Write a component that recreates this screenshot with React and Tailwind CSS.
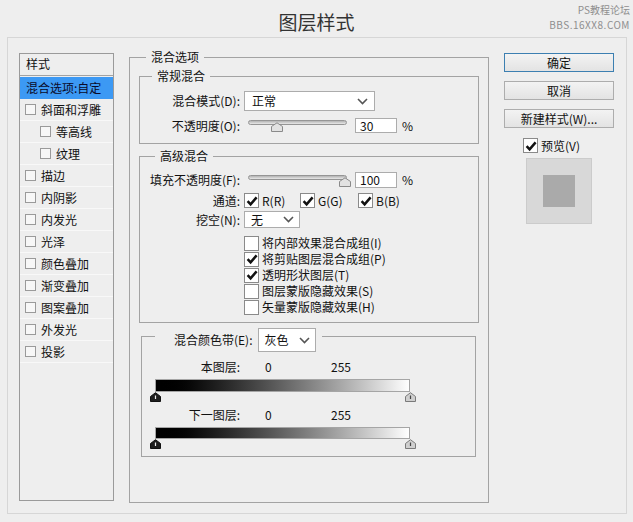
import React from "react";

const Check = () => (
  <svg width="12" height="12" viewBox="0 0 12 12">
    <path d="M1.6 6.2 L4.6 9.4 L10.6 2.4" fill="none" stroke="#111" strokeWidth="2.5" />
  </svg>
);

function Box({ checked }) {
  return (
    <div className="flex items-center justify-center w-[15px] h-[15px] bg-white border border-[#8a8a8a]">
      {checked ? <Check /> : null}
    </div>
  );
}

function SmallBox() {
  return <div className="w-[11px] h-[11px] border border-[#9a9a9a] bg-[#f7f7f7]" />;
}

const Chevron = () => (
  <svg width="11" height="7" viewBox="0 0 11 7">
    <path d="M1 1 L5.5 5.5 L10 1" fill="none" stroke="#555" strokeWidth="1.6" />
  </svg>
);

function Slider({ pos }) {
  return (
    <div className="relative w-[99px] h-[15px]">
      <div className="absolute left-0 right-0 top-[2px] h-[5px] rounded-full border border-[#959595] bg-gradient-to-b from-[#b3b3b3] to-[#e8e8e8]" />
      <svg className="absolute top-[4px]" style={{ left: pos - 6 }} width="12" height="10" viewBox="0 0 12 10">
        <path d="M0.5 9.5 V4.5 L6 0.8 L11.5 4.5 V9.5 Z" fill="#e2e2e2" stroke="#8a8a8a" />
      </svg>
    </div>
  );
}

function Thumb({ dark }) {
  return (
    <svg width="11" height="10" viewBox="0 0 11 10">
      <path
        d="M0.5 9.5 V4.5 L5.5 0.7 L10.5 4.5 V9.5 Z"
        fill={dark ? "#1e1e1e" : "#cfcfcf"}
        stroke={dark ? "#111" : "#7a7a7a"}
      />
      <path d="M5.5 3.5 V7" stroke={dark ? "#eee" : "#444"} strokeWidth="1.2" />
    </svg>
  );
}

function Button({ children, primary }) {
  return (
    <div
      className={
        primary
          ? "flex items-center justify-center w-[110px] h-[19px] border border-[#3c7fb1] bg-gradient-to-b from-[#f3f3f3] to-[#e3e3e3] text-[12px] leading-[16px]"
          : "flex items-center justify-center w-[110px] h-[19px] border border-[#adadad] bg-gradient-to-b from-[#f3f3f3] to-[#e3e3e3] text-[12px] leading-[16px]"
      }
    >
      {children}
    </div>
  );
}

const listItems = [
  { t: "斜面和浮雕", indent: false },
  { t: "等高线", indent: true },
  { t: "纹理", indent: true },
  { t: "描边", indent: false },
  { t: "内阴影", indent: false },
  { t: "内发光", indent: false },
  { t: "光泽", indent: false },
  { t: "颜色叠加", indent: false },
  { t: "渐变叠加", indent: false },
  { t: "图案叠加", indent: false },
  { t: "外发光", indent: false },
  { t: "投影", indent: false },
];

const options = [
  { t: "将内部效果混合成组(I)", c: false },
  { t: "将剪贴图层混合成组(P)", c: true },
  { t: "透明形状图层(T)", c: true },
  { t: "图层蒙版隐藏效果(S)", c: false },
  { t: "矢量蒙版隐藏效果(H)", c: false },
];

export default function App() {
  return (
    <div className="relative w-[633px] h-[522px] bg-[#eeeeee] text-[#111] text-[12px] font-['Noto_Sans_CJK_SC',sans-serif] overflow-hidden">
      {/* watermark */}
      <div className="absolute right-[3px] top-[2px] flex flex-col items-end text-[#8f8f8f]">
        <div className="h-[15px] text-[10px] leading-[15px]">PS教程论坛</div>
        <div className="h-[15px] text-[10px] leading-[15px] tracking-[0.5px]">BBS.16XX8.COM</div>
      </div>

      <div className="h-[37px] flex justify-center pt-[11px]">
        <span className="text-[19px] leading-[22px] text-[#333]">图层样式</span>
      </div>

      <div className="ml-[7px] w-[620px] h-[477px] border border-[#d6d6d6] flex items-start pl-[11px]">
        {/* left list */}
        <div className="mt-[15px] w-[95px] h-[448px] border border-[#9a9a9a] flex flex-col">
          <div className="h-[22px] border-b border-[#a3a3a3] pl-[6px] leading-[20px]">样式</div>
          <div className="mt-px h-[22px] bg-[#3c99f4] pl-[6px] leading-[22px] text-[#0a0a2a]">混合选项:自定</div>
          {listItems.map((it) => (
            <div
              key={it.t}
              className={
                it.indent
                  ? "h-[22px] border-b border-[#f8f8f8] flex items-center pl-[20px]"
                  : "h-[22px] border-b border-[#f8f8f8] flex items-center pl-[5px]"
              }
            >
              <SmallBox />
              <span className="ml-[5px] leading-[16px]">{it.t}</span>
            </div>
          ))}
        </div>

        {/* middle */}
        <div className="ml-[15px] mt-[19px] w-[360px] h-[446px] border border-[#a3a3a3] px-[9px]">
          <div className="-mt-[9px] ml-[7px] w-fit h-[16px] px-[5px] bg-[#eeeeee] leading-[16px]">混合选项</div>

          {/* 常规混合 */}
          <div className="mt-[11px] w-[340px] h-[68px] border border-[#a3a3a3]">
            <div className="-mt-[9px] ml-[12px] w-fit h-[16px] px-[5px] bg-[#eeeeee] leading-[16px]">常规混合</div>
            <div className="mt-[7px] flex items-center h-[20px]">
              <span className="w-[100px] text-right leading-[16px]">混合模式(D):</span>
              <div className="ml-[4px] w-[131px] h-[20px] bg-white border border-[#acacac] flex items-center justify-between pl-[7px] pr-[6px]">
                <span className="leading-[16px]">正常</span>
                <Chevron />
              </div>
            </div>
            <div className="mt-[7px] flex items-center h-[15px]">
              <span className="w-[100px] text-right leading-[15px]">不透明度(O):</span>
              <div className="ml-[8px]">
                <Slider pos={29} />
              </div>
              <div className="ml-[8px] w-[42px] h-[15px] bg-white border border-[#acacac] pl-[4px] leading-[13px]">30</div>
              <span className="ml-[5px] leading-[15px]">%</span>
            </div>
          </div>

          {/* 高级混合 */}
          <div className="mt-[12px] w-[340px] h-[167px] border border-[#a3a3a3]">
            <div className="-mt-[9px] ml-[15px] w-fit h-[16px] px-[5px] bg-[#eeeeee] leading-[16px]">高级混合</div>
            <div className="mt-[8px] flex items-center h-[16px]">
              <span className="w-[100px] text-right leading-[16px]">填充不透明度(F):</span>
              <div className="ml-[8px]">
                <Slider pos={97} />
              </div>
              <div className="ml-[8px] w-[42px] h-[16px] bg-white border border-[#acacac] pl-[4px] leading-[14px]">100</div>
              <span className="ml-[5px] leading-[16px]">%</span>
            </div>
            <div className="mt-[5px] flex items-center h-[15px]">
              <span className="w-[100px] text-right leading-[15px]">通道:</span>
              <div className="ml-[4px] w-[56px] flex items-center">
                <Box checked />
                <span className="ml-[3px] leading-[15px]">R(R)</span>
              </div>
              <div className="w-[58px] flex items-center">
                <Box checked />
                <span className="ml-[3px] leading-[15px]">G(G)</span>
              </div>
              <div className="flex items-center">
                <Box checked />
                <span className="ml-[3px] leading-[15px]">B(B)</span>
              </div>
            </div>
            <div className="mt-[3px] flex items-center h-[17px]">
              <span className="w-[100px] text-right leading-[16px]">挖空(N):</span>
              <div className="ml-[4px] w-[56px] h-[17px] bg-white border border-[#acacac] flex items-center justify-between pl-[6px] pr-[5px]">
                <span className="leading-[15px]">无</span>
                <Chevron />
              </div>
            </div>
            <div className="mt-[7px] ml-[104px] flex flex-col">
              {options.map((o) => (
                <div key={o.t} className="h-[16px] flex items-center">
                  <Box checked={o.c} />
                  <span className="ml-[3px] leading-[16px]">{o.t}</span>
                </div>
              ))}
            </div>
          </div>

          {/* 混合颜色带 */}
          <div className="mt-[13px] ml-[2px] w-[335px] h-[121px] border border-[#a3a3a3]">
            <div className="-mt-[9px] ml-[13px] w-fit h-[24px] pl-[19px] pr-[6px] bg-[#eeeeee] flex items-center">
              <span className="leading-[16px]">混合颜色带(E):</span>
              <div className="ml-[5px] w-[58px] h-[24px] bg-white border border-[#acacac] flex items-center justify-between pl-[6px] pr-[5px]">
                <span className="leading-[16px]">灰色</span>
                <Chevron />
              </div>
            </div>

            <div className="mt-[8px] flex items-center h-[14px]">
              <span className="w-[98px] text-right leading-[14px]">本图层:</span>
              <span className="ml-[25px] w-[66px] leading-[14px]">0</span>
              <span className="leading-[14px]">255</span>
            </div>
            <div className="mt-[5px] ml-[13px] w-[255px] h-[13px] border border-[#a5a5a5] bg-gradient-to-r from-[#000000] to-[#ffffff]" />
            <div className="ml-[8px] w-[266px] h-[10px] flex justify-between">
              <Thumb dark />
              <Thumb />
            </div>

            <div className="mt-[6px] flex items-center h-[14px]">
              <span className="w-[98px] text-right leading-[14px]">下一图层:</span>
              <span className="ml-[25px] w-[66px] leading-[14px]">0</span>
              <span className="leading-[14px]">255</span>
            </div>
            <div className="mt-[5px] ml-[13px] w-[255px] h-[12px] border border-[#a5a5a5] bg-gradient-to-r from-[#000000] to-[#ffffff]" />
            <div className="ml-[8px] w-[266px] h-[10px] flex justify-between">
              <Thumb dark />
              <Thumb />
            </div>
          </div>
        </div>

        {/* right */}
        <div className="ml-[15px] mt-[15px] flex flex-col">
          <Button primary>确定</Button>
          <div className="mt-[9px]">
            <Button>取消</Button>
          </div>
          <div className="mt-[9px]">
            <Button>新建样式(W)...</Button>
          </div>
          <div className="mt-[10px] ml-[19px] flex items-center h-[15px]">
            <Box checked />
            <span className="ml-[3px] leading-[15px]">预览(V)</span>
          </div>
          <div className="mt-[5px] ml-[22px] w-[66px] h-[66px] bg-[#d8d8d8] border border-[#cbcbcb] flex items-center justify-center">
            <div className="w-[32px] h-[32px] bg-[#aaaaaa]" />
          </div>
        </div>
      </div>
    </div>
  );
}
